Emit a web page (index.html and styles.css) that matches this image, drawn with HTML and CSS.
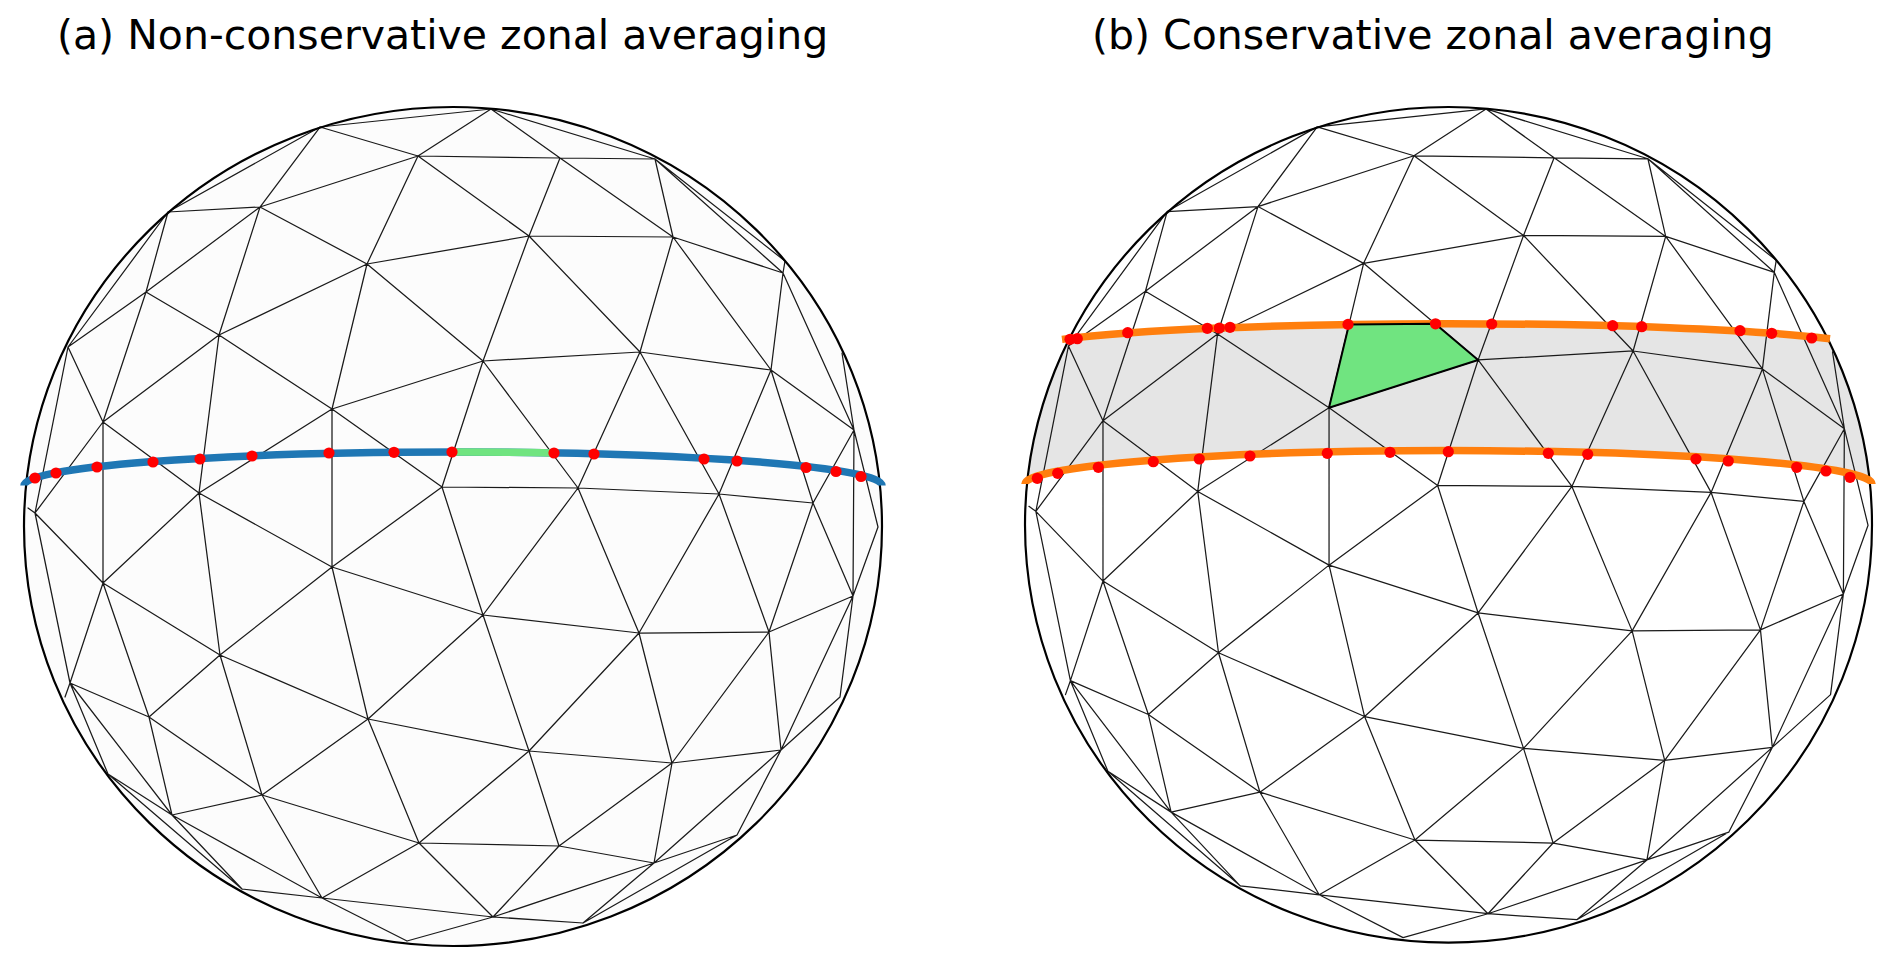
FILE: index.html
```html
<!DOCTYPE html>
<html lang="en">
<head>
<meta charset="utf-8">
<title>Zonal averaging</title>
<link rel="stylesheet" href="styles.css">
</head>
<body>
<div class="figure">
  <div class="panel">
    <div class="title title-a">(a) Non-conservative zonal averaging</div>
    <svg class="plot" viewBox="0 95 946 870" xmlns="http://www.w3.org/2000/svg">
      <defs>
        <g id="mesh">
          <path class="mesh" d="M491 109L320 127M491 109L418 156M491 109L560 158M491 109L655 159M320 127L418 156M320 127L260 207M320 127L168 212M418 156L560 158M418 156L260 207M418 156L367 264M418 156L529 236M560 158L655 159M560 158L529 236M560 158L673 237M655 159L673 237M655 159L785 261M655 159L783 273M260 207L168 212M260 207L367 264M260 207L146 292M260 207L219 335M168 212L146 292M168 212L68 347M367 264L529 236M367 264L219 335M367 264L332 409M367 264L483 361M529 236L673 237M529 236L483 361M529 236L640 352M673 237L783 273M673 237L640 352M673 237L771 370M785 261L783 273M783 273L771 370M783 273L854 430M146 292L219 335M146 292L68 347M146 292L103 422M219 335L332 409M219 335L103 422M219 335L199 493M68 347L103 422M68 347L35 513M332 409L483 361M332 409L199 493M332 409L442 487M332 409L332 567M483 361L640 352M483 361L442 487M483 361L578 488M640 352L771 370M640 352L578 488M640 352L719 494M771 370L854 430M771 370L719 494M771 370L813 503M842 353L854 430M854 430L813 503M854 430L853 596M854 430L878 527M103 422L199 493M103 422L35 513M103 422L103 583M199 493L103 583M199 493L332 567M199 493L220 655M442 487L578 488M442 487L332 567M442 487L483 615M578 488L719 494M578 488L483 615M578 488L639 633M719 494L813 503M719 494L639 633M719 494L769 632M813 503L769 632M813 503L853 596M35 513L103 583M35 513L70 683M35 513L28 508M103 583L220 655M103 583L70 683M103 583L149 717M332 567L220 655M332 567L368 719M332 567L483 615M220 655L149 717M220 655L368 719M220 655L262 795M70 683L149 717M70 683L172 815M70 683L108 774M70 683L65 697M149 717L262 795M149 717L172 815M368 719L262 795M368 719L419 843M368 719L483 615M368 719L529 751M262 795L172 815M262 795L419 843M262 795L322 898M172 815L108 774M172 815L242 889M172 815L322 898M108 774L242 889M419 843L322 898M419 843L529 751M419 843L559 846M419 843L493 917M242 889L322 898M322 898L407 941M322 898L493 917M407 941L493 917M483 615L639 633M483 615L529 751M639 633L769 632M639 633L529 751M639 633L672 763M769 632L853 596M769 632L672 763M769 632L781 750M853 596L878 527M853 596L781 750M853 596L840 697M529 751L672 763M529 751L559 846M672 763L781 750M672 763L559 846M672 763L654 863M781 750L840 697M781 750L654 863M781 750L737 835M559 846L654 863M559 846L493 917M654 863L737 835M654 863L493 917M654 863L583 923M737 835L583 923M493 917L583 923"/>
          <ellipse class="rim" cx="453" cy="526.5" rx="429" ry="419.5"/>
        </g>
      </defs>
      <ellipse class="sphere-a" cx="453" cy="526.5" rx="429" ry="419.5"/>
      <use href="#mesh"/>
      <path class="zone-blue" d="M24 485.5A429 33.5 0 0 1 882 485.5"/>
      <path class="zone-green" d="M452 452A429 33.5 0 0 1 554 452.9"/>
      <g class="dots">
        <circle cx="35" cy="478" r="5.6"/>
        <circle cx="56" cy="473" r="5.6"/>
        <circle cx="97" cy="467" r="5.6"/>
        <circle cx="153" cy="462" r="5.6"/>
        <circle cx="200" cy="459" r="5.6"/>
        <circle cx="252" cy="456" r="5.6"/>
        <circle cx="329" cy="453" r="5.6"/>
        <circle cx="394" cy="452.3" r="5.6"/>
        <circle cx="452" cy="452" r="5.6"/>
        <circle cx="554" cy="453" r="5.6"/>
        <circle cx="594" cy="454" r="5.6"/>
        <circle cx="704" cy="459" r="5.6"/>
        <circle cx="737" cy="461" r="5.6"/>
        <circle cx="806" cy="467.5" r="5.6"/>
        <circle cx="836" cy="471.5" r="5.6"/>
        <circle cx="861" cy="476.5" r="5.6"/>
      </g>
    </svg>
  </div>
  <div class="panel">
    <div class="title title-b">(b) Conservative zonal averaging</div>
    <svg class="plot" viewBox="946 95 946 870" xmlns="http://www.w3.org/2000/svg">
      <defs>
        <clipPath id="sphere-b-clip">
          <ellipse cx="1448.5" cy="524.8" rx="423.5" ry="417.8"/>
        </clipPath>
      </defs>
      <ellipse class="sphere-b" cx="1448.5" cy="524.8" rx="423.5" ry="417.8"/>
      <path class="band" clip-path="url(#sphere-b-clip)" d="M1062 339.4A430 28 0 0 1 1830 338.8L1900 338.8L1900 484L1872 484A423.5 33.4 0 0 0 1025 484L1000 484L1000 339.4Z"/>
      <use href="#mesh" transform="matrix(0.9872 0 0 0.996 1001.3 0.4)"/>
      <path class="zone-orange" d="M1062 339.4A430 28 0 0 1 1830 338.8"/>
      <path class="zone-orange" d="M1025 484A423.5 33.4 0 0 1 1872 484"/>
      <polygon class="cell" points="1349,324.4 1435.2,323.8 1478.1,360 1329,407.8"/>
      <g class="dots">
        <circle cx="1070" cy="339.3" r="5.6"/>
        <circle cx="1077.3" cy="338.7" r="5.6"/>
        <circle cx="1127.7" cy="332.7" r="5.6"/>
        <circle cx="1207.3" cy="328.3" r="5.6"/>
        <circle cx="1219.3" cy="328" r="5.6"/>
        <circle cx="1230" cy="327.3" r="5.6"/>
        <circle cx="1348" cy="324.4" r="5.6"/>
        <circle cx="1435.5" cy="323.8" r="5.6"/>
        <circle cx="1491.7" cy="324" r="5.6"/>
        <circle cx="1612.7" cy="325.7" r="5.6"/>
        <circle cx="1641.7" cy="326.7" r="5.6"/>
        <circle cx="1740" cy="330.7" r="5.6"/>
        <circle cx="1771.7" cy="333.3" r="5.6"/>
        <circle cx="1811.7" cy="338" r="5.6"/>
        <circle cx="1037.3" cy="478.3" r="5.6"/>
        <circle cx="1057.7" cy="473.3" r="5.6"/>
        <circle cx="1098.3" cy="467.3" r="5.6"/>
        <circle cx="1153.3" cy="461.7" r="5.6"/>
        <circle cx="1199.3" cy="459" r="5.6"/>
        <circle cx="1250" cy="456" r="5.6"/>
        <circle cx="1327.3" cy="453.3" r="5.6"/>
        <circle cx="1390" cy="452.3" r="5.6"/>
        <circle cx="1448.3" cy="451.7" r="5.6"/>
        <circle cx="1548.3" cy="453.3" r="5.6"/>
        <circle cx="1587.7" cy="454.3" r="5.6"/>
        <circle cx="1696" cy="459" r="5.6"/>
        <circle cx="1728.3" cy="461" r="5.6"/>
        <circle cx="1796.7" cy="467.3" r="5.6"/>
        <circle cx="1826" cy="471" r="5.6"/>
        <circle cx="1850" cy="477.3" r="5.6"/>
      </g>
    </svg>
  </div>
</div>
</body>
</html>
```

FILE: styles.css
```css
html, body {
  margin: 0;
  padding: 0;
  background: #ffffff;
}

.figure {
  display: flex;
  width: 1892px;
  height: 965px;
  overflow: hidden;
}

.panel {
  width: 946px;
  display: flex;
  flex-direction: column;
}

.title {
  box-sizing: border-box;
  height: 95px;
  padding-top: 12px;
  font-family: "DejaVu Sans", "Liberation Sans", sans-serif;
  font-size: 41px;
  line-height: 47px;
  color: #000000;
  white-space: nowrap;
}

.title-a {
  padding-left: 57px;
}

.title-b {
  padding-left: 146px;
}

.plot {
  display: block;
  width: 946px;
  height: 870px;
}

.mesh {
  fill: none;
  stroke: #1a1a1a;
  stroke-width: 1.25;
  stroke-linecap: round;
}

.rim {
  fill: none;
  stroke: #000000;
  stroke-width: 2.2;
}

.sphere-a {
  fill: #fcfcfc;
}

.sphere-b {
  fill: #ffffff;
}

.band {
  fill: #e5e5e5;
}

.zone-blue,
.zone-green,
.zone-orange {
  fill: none;
  stroke-width: 7.5;
}

.zone-blue {
  stroke: #1f77b4;
}

.zone-green {
  stroke: #70e480;
}

.zone-orange {
  stroke: #ff7f0e;
}

.cell {
  fill: #70e480;
  stroke: #000000;
  stroke-width: 2;
  stroke-linejoin: round;
}

.dots circle {
  fill: #ff0000;
}
```
